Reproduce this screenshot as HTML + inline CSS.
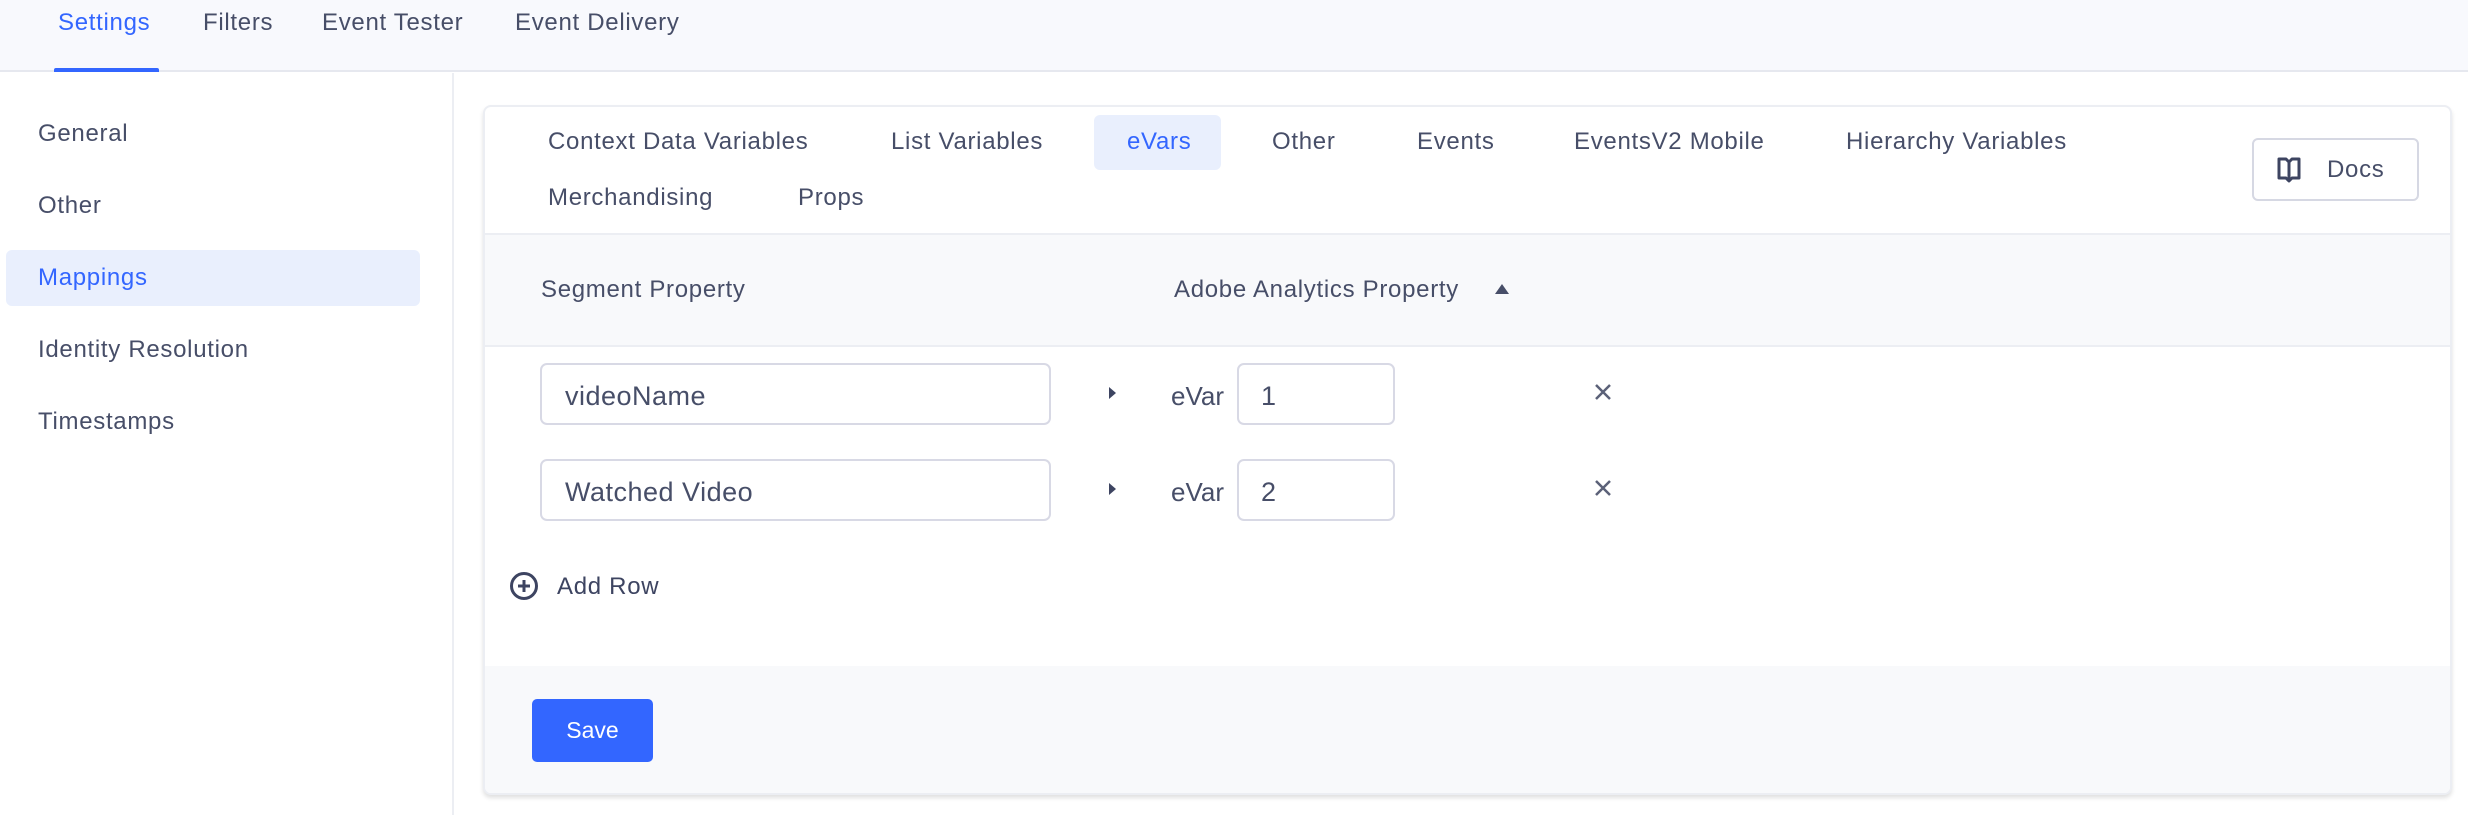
<!DOCTYPE html>
<html><head><style>
*{box-sizing:border-box;margin:0;padding:0}
body{width:2468px;height:815px;background:#fff;font-family:"Liberation Sans",sans-serif;color:#474e68;position:relative;overflow:hidden}
.a{position:absolute;white-space:nowrap}
.t{font-size:24px;line-height:1;letter-spacing:0.7px}
</style></head><body>
<div class="a" style="left:0;top:0;width:2468px;height:72px;background:#f8f9fd;border-bottom:2px solid #e6e8ef"></div>
<div class="a t" style="left:58px;top:11px;color:#3366ff">Settings</div>
<div class="a t" style="left:203px;top:11px">Filters</div>
<div class="a t" style="left:322px;top:11px">Event Tester</div>
<div class="a t" style="left:515px;top:11px">Event Delivery</div>
<div class="a" style="left:54px;top:68px;width:105px;height:4px;background:#3366ff;border-radius:2px 2px 0 0"></div>
<div class="a" style="left:452px;top:73px;width:2px;height:742px;background:#eceef3"></div>
<div class="a" style="left:6px;top:250px;width:414px;height:56px;background:#e9effd;border-radius:6px"></div>
<div class="a t" style="left:38px;top:122px">General</div>
<div class="a t" style="left:38px;top:194px">Other</div>
<div class="a t" style="left:38px;top:266px;color:#3366ff">Mappings</div>
<div class="a t" style="left:38px;top:338px">Identity Resolution</div>
<div class="a t" style="left:38px;top:410px">Timestamps</div>
<div class="a" style="left:483px;top:105px;width:1969px;height:690px;border:2px solid #eceef3;border-radius:8px;box-shadow:0 3px 4px rgba(0,0,0,.12);overflow:hidden;background:#fff">
 <div class="a" style="left:0;top:126px;width:100%;height:114px;background:#f8f9fb;border-top:2px solid #eceef3;border-bottom:2px solid #eceef3"></div>
 <div class="a" style="left:0;top:559px;width:100%;height:140px;background:#f8f9fb"></div>
</div>
<div class="a" style="left:1094px;top:115px;width:127px;height:55px;background:#e9effd;border-radius:6px"></div>
<div class="a t" style="left:548px;top:130px">Context Data Variables</div>
<div class="a t" style="left:891px;top:130px">List Variables</div>
<div class="a t" style="left:1127px;top:130px;color:#3366ff">eVars</div>
<div class="a t" style="left:1272px;top:130px">Other</div>
<div class="a t" style="left:1417px;top:130px">Events</div>
<div class="a t" style="left:1574px;top:130px">EventsV2 Mobile</div>
<div class="a t" style="left:1846px;top:130px">Hierarchy Variables</div>
<div class="a t" style="left:548px;top:186px">Merchandising</div>
<div class="a t" style="left:798px;top:186px">Props</div>
<div class="a" style="left:2252px;top:138px;width:167px;height:63px;border:2px solid #d6d8e3;border-radius:6px;background:#fff"></div>
<svg class="a" style="left:2276px;top:156px" width="26" height="28" viewBox="0 0 26 28"><path d="M3 3h7l3 3 3-3h7v19h-7l-3 3-3-3H3z M13 6v19" fill="none" stroke="#3d4461" stroke-width="3" stroke-linejoin="round"/></svg>
<div class="a t" style="left:2327px;top:158px">Docs</div>
<div class="a t" style="left:541px;top:278px">Segment Property</div>
<div class="a t" style="left:1174px;top:278px">Adobe Analytics Property</div>
<svg class="a" style="left:1494px;top:283px" width="16" height="12"><path d="M8 1L15 11H1z" fill="#474e68"/></svg>
<div class="a" style="left:540px;top:363px;width:511px;height:62px;border:2px solid #d8d9e5;border-radius:7px"></div>
<div class="a" style="left:565px;top:381px;font-size:27px;letter-spacing:0.5px">videoName</div>
<svg class="a" style="left:1108px;top:386px" width="10" height="14"><path d="M1 1L8 7 1 13z" fill="#3d4461"/></svg>
<div class="a" style="left:1171px;top:381px;font-size:26px">eVar</div>
<div class="a" style="left:1237px;top:363px;width:158px;height:62px;border:2px solid #d8d9e5;border-radius:7px"></div>
<div class="a" style="left:1261px;top:381px;font-size:27px">1</div>
<svg class="a" style="left:1594px;top:383px" width="18" height="18"><path d="M2 2L16 16M16 2L2 16" stroke="#5b6178" stroke-width="2.5"/></svg>
<div class="a" style="left:540px;top:459px;width:511px;height:62px;border:2px solid #d8d9e5;border-radius:7px"></div>
<div class="a" style="left:565px;top:477px;font-size:27px;letter-spacing:0.5px">Watched Video</div>
<svg class="a" style="left:1108px;top:482px" width="10" height="14"><path d="M1 1L8 7 1 13z" fill="#3d4461"/></svg>
<div class="a" style="left:1171px;top:477px;font-size:26px">eVar</div>
<div class="a" style="left:1237px;top:459px;width:158px;height:62px;border:2px solid #d8d9e5;border-radius:7px"></div>
<div class="a" style="left:1261px;top:477px;font-size:27px">2</div>
<svg class="a" style="left:1594px;top:479px" width="18" height="18"><path d="M2 2L16 16M16 2L2 16" stroke="#5b6178" stroke-width="2.5"/></svg>
<svg class="a" style="left:509px;top:571px" width="30" height="30"><circle cx="15" cy="15" r="12.5" fill="none" stroke="#3d4461" stroke-width="3"/><path d="M15 9v12M9 15h12" stroke="#3d4461" stroke-width="3"/></svg>
<div class="a t" style="left:557px;top:575px;color:#3d4461">Add Row</div>
<div class="a" style="left:532px;top:699px;width:121px;height:63px;background:#3366ff;border-radius:5px;color:#fff;font-size:23px;text-align:center;line-height:63px">Save</div>
</body></html>
